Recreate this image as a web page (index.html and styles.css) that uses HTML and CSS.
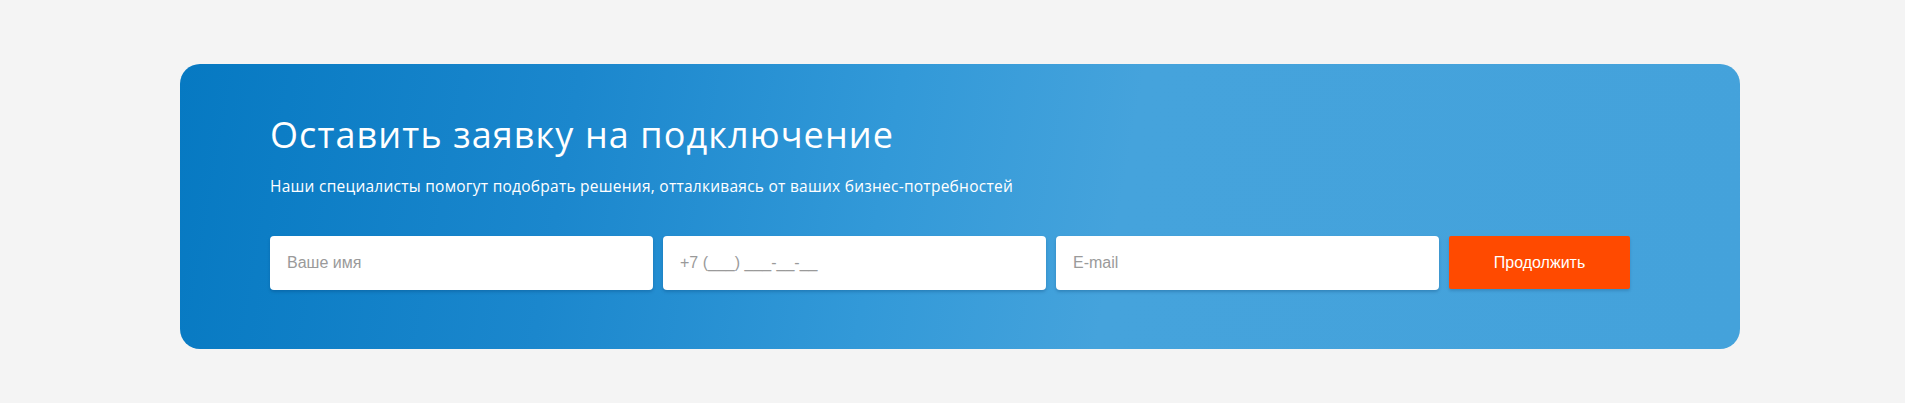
FILE: index.html
```html
<!DOCTYPE html>
<html lang="ru">
<head>
<meta charset="utf-8">
<title>Оставить заявку</title>
<link rel="stylesheet" href="styles.css">
</head>
<body>
<section class="request">
  <h2 class="request__title">Оставить заявку на подключение</h2>
  <p class="request__text">Наши специалисты помогут подобрать решения, отталкиваясь от ваших бизнес-потребностей</p>
  <form class="request__form">
    <input class="request__input" type="text" placeholder="Ваше имя">
    <input class="request__input" type="tel" placeholder="+7 (___) ___-__-__">
    <input class="request__input" type="email" placeholder="E-mail">
    <button class="request__button" type="button">Продолжить</button>
  </form>
</section>
</body>
</html>
```
FILE: styles.css
```css
html, body {
  margin: 0;
  padding: 0;
  background: #f4f4f4;
}
body {
  padding: 64px 165px 54px 180px;
  font-family: "Liberation Sans", Arial, sans-serif;
}
.request {
  box-sizing: border-box;
  height: 285px;
  border-radius: 20px;
  padding: 49px 90px 0 90px;
  background: linear-gradient(100deg, #0679c2 0%, #1b87cd 25%, #3299d8 45%, #45a3dc 60%, #44a2db 100%);
  color: #fff;
}
.request__title {
  margin: 0;
  font-family: "Open Sans", sans-serif;
  font-weight: 400;
  font-size: 36px;
  line-height: 44px;
  letter-spacing: 1.1px;
}
.request__text {
  margin: 19px 0 0 0;
  font-family: "Open Sans", sans-serif;
  font-size: 15.5px;
  line-height: 20px;
  letter-spacing: 0.25px;
}
.request__form {
  display: flex;
  gap: 10px;
  margin-top: 40px;
}
.request__input {
  box-sizing: border-box;
  width: 383px;
  height: 54px;
  border: none;
  border-radius: 4px;
  padding: 0 17px;
  font-family: "Liberation Sans", Arial, sans-serif;
  font-size: 16px;
  color: #333;
  background: #fff;
  box-shadow: 0 2px 3px rgba(0, 50, 100, 0.25);
  outline: none;
}
.request__input::placeholder {
  color: #9a9a9a;
}
.request__button {
  box-sizing: border-box;
  width: 181px;
  height: 53px;
  border: none;
  border-radius: 2px;
  background: #ff4a00;
  color: #fff;
  font-family: "Liberation Sans", Arial, sans-serif;
  font-size: 16px;
  box-shadow: 0 2px 3px rgba(0, 50, 100, 0.2);
  cursor: pointer;
}
```
